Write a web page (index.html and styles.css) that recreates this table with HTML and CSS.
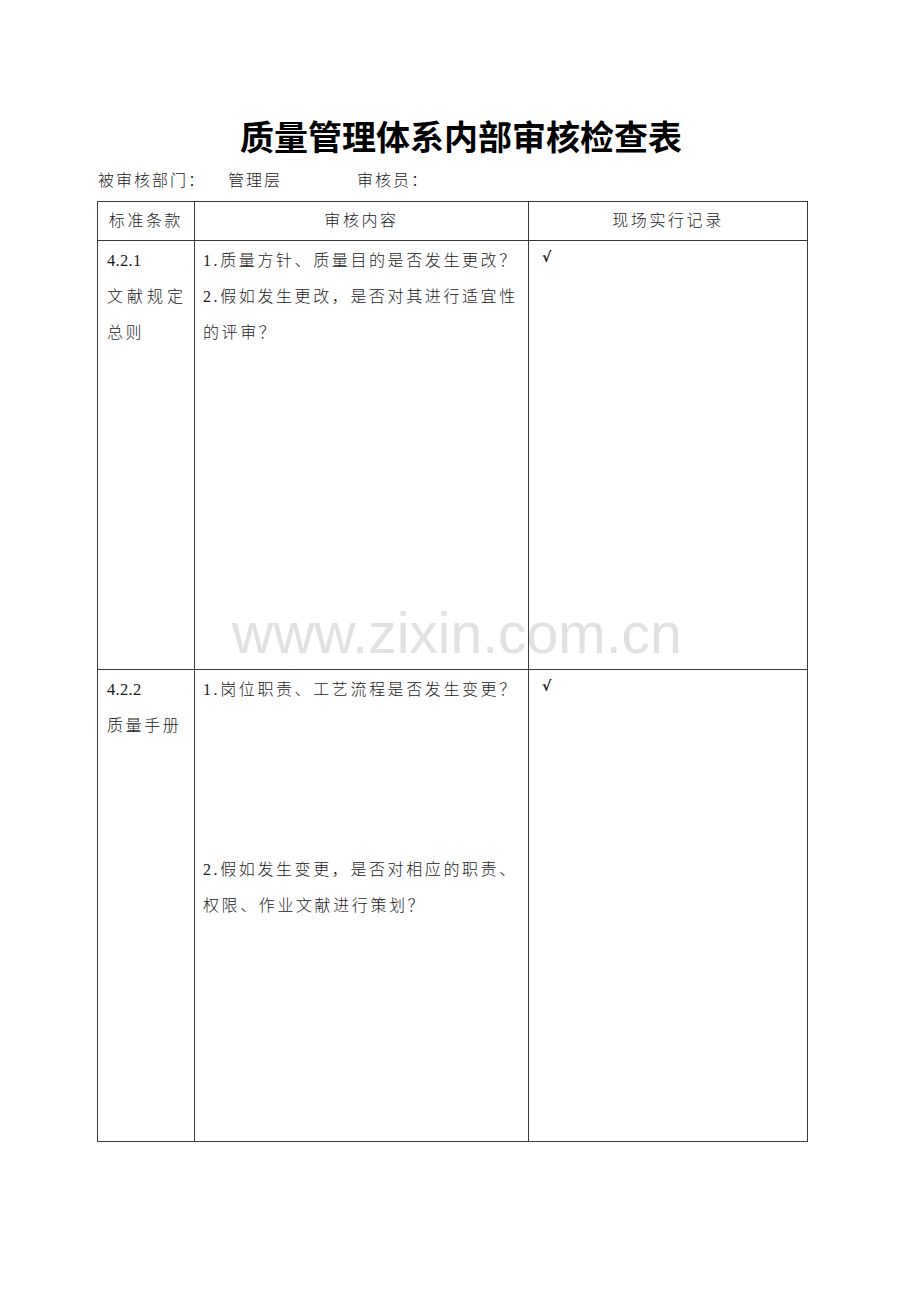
FILE: index.html
```html
<!DOCTYPE html>
<html lang="zh-CN">
<head>
<meta charset="utf-8">
<title>质量管理体系内部审核检查表</title>
<link rel="stylesheet" href="styles.css">
</head>
<body>
<div class="page">
  <h1 class="title">质量管理体系内部审核检查表</h1>
  <div class="meta">
    <span class="meta-label">被审核部门：</span>
    <span class="meta-dept">管理层</span>
    <span class="meta-auditor">审核员：</span>
  </div>
  <table class="sheet">
    <colgroup>
      <col class="c1">
      <col class="c2">
      <col class="c3">
    </colgroup>
    <thead>
      <tr class="head">
        <th>标准条款</th>
        <th>审核内容</th>
        <th>现场实行记录</th>
      </tr>
    </thead>
    <tbody>
      <tr class="row1">
        <td class="clause"><span class="num">4.2.1</span><br><span class="just">文献规定</span><br>总则</td>
        <td class="content">1.质量方针、质量目的是否发生更改？<br>2.假如发生更改，是否对其进行适宜性的评审？</td>
        <td class="record"><span class="check">√</span></td>
      </tr>
      <tr class="row2">
        <td class="clause"><span class="num">4.2.2</span><br>质量手册</td>
        <td class="content">1.岗位职责、工艺流程是否发生变更？<br><br><br><br><br>2.假如发生变更，是否对相应的职责、权限、作业文献进行策划？</td>
        <td class="record"><span class="check">√</span></td>
      </tr>
    </tbody>
  </table>
  <div class="watermark">www.zixin.com.cn</div>
</div>
</body>
</html>
```

FILE: styles.css
```css
html, body {
  margin: 0;
  padding: 0;
  background: #fff;
}

.page {
  position: relative;
  width: 920px;
  height: 1302px;
  padding-top: 116px;
  box-sizing: border-box;
  font-family: "Liberation Serif", "Noto Sans CJK SC", serif;
  font-weight: 300;
  color: #1a1a1a;
}

.title {
  margin: 0;
  height: 40px;
  line-height: 40px;
  text-align: center;
  font-family: "Noto Sans CJK SC", sans-serif;
  font-weight: 700;
  font-size: 34px;
  letter-spacing: 0;
  color: #000;
  padding-left: 2px;
}

.meta {
  margin: 15px 0 0 98px;
  height: 20px;
  line-height: 20px;
  font-size: 16px;
  display: flex;
  letter-spacing: 2px;
}

.meta-label { width: 130px; }
.meta-dept { width: 129px; }

.sheet {
  margin: 10px 0 0 97px;
  width: 710px;
  border-collapse: collapse;
  table-layout: fixed;
  border: 1.5px solid #3a3a3a;
  font-size: 16px;
}

.c1 { width: 97px; }
.c2 { width: 334px; }
.c3 { width: 279px; }

.sheet th, .sheet td {
  border: 1px solid #3a3a3a;
  padding: 0;
  font-weight: 300;
  letter-spacing: 2.6px;
}

.head th {
  height: 38px;
  text-align: center;
  vertical-align: middle;
  line-height: 20px;
}

.sheet td {
  vertical-align: top;
  line-height: 36px;
  padding-top: 2px;
}

.row1 td { height: 426px; }
.row2 td { height: 469px; }

.clause { padding-left: 9px !important; }
.num { letter-spacing: 0.3px; font-size: 16.5px; }
.just { letter-spacing: 4px; }
.content { padding-left: 8px !important; padding-right: 0 !important; }
.record { padding-left: 13px !important; }

.check {
  display: inline-block;
  font-family: "DejaVu Sans", sans-serif;
  font-size: 14px;
  font-weight: bold;
  line-height: 14px;
  vertical-align: top;
  margin-top: 7px;
}

.watermark {
  position: absolute;
  left: 232px;
  top: 598px;
  font-family: "Liberation Sans", sans-serif;
  font-size: 57px;
  line-height: 70px;
  font-weight: 400;
  color: rgba(200, 200, 200, 0.55);
  pointer-events: none;
  white-space: nowrap;
}
```
